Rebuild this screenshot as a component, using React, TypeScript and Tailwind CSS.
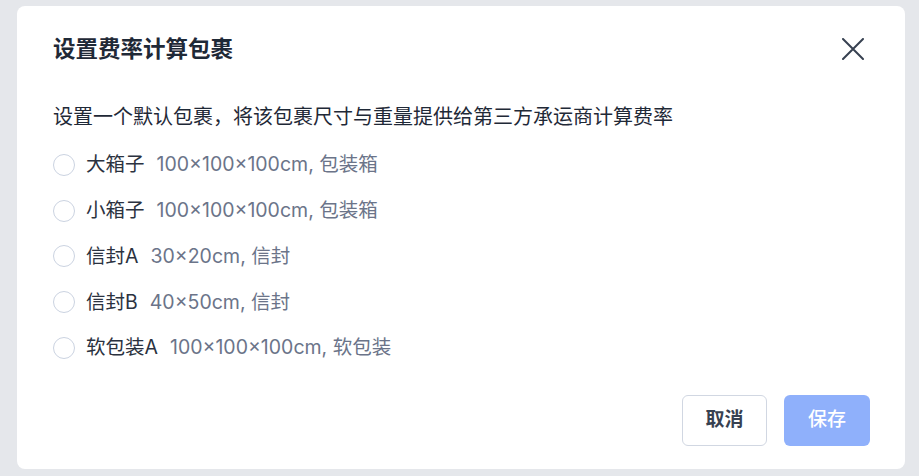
const PACKAGES = [
  { name: '大箱子', detail: '100×100×100cm, 包装箱' },
  { name: '小箱子', detail: '100×100×100cm, 包装箱' },
  { name: '信封A', detail: '30×20cm, 信封' },
  { name: '信封B', detail: '40×50cm, 信封' },
  { name: '软包装A', detail: '100×100×100cm, 软包装' },
]

export default function App() {
  return (
    <div
      className="h-[476px] w-[919px] overflow-hidden bg-[#e5e7eb] pl-[17px] pt-[6px]"
      style={{ fontFamily: 'Inter, "Noto Sans CJK SC", sans-serif' }}
    >
      <div className="flex h-[463px] w-[888px] flex-col rounded-lg bg-white pl-[36px] pr-[35px]">
        {/* header */}
        <div className="flex h-[86px] items-center justify-between pb-[1px]">
          <h2 className="text-[22.5px] font-semibold leading-[28px] text-[#1f2937]">设置费率计算包裹</h2>
          <button className="mr-[6px] text-[#374151]">
            <svg width="22" height="22" viewBox="0 0 22 22" fill="none" stroke="currentColor" strokeWidth="2" strokeLinecap="round">
              <path d="M1 1l20 20M21 1L1 21" />
            </svg>
          </button>
        </div>

        <p className="flex h-[50px] items-center text-[20px] leading-[28px] text-[#1f2937]">
          设置一个默认包裹，将该包裹尺寸与重量提供给第三方承运商计算费率
        </p>

        {/* package options */}
        <div className="flex flex-col">
          {PACKAGES.map((p) => (
            <label key={p.name} className="flex h-[45.75px] items-center">
              <span className="h-[22px] w-[22px] shrink-0 rounded-full border-[1.5px] border-[#cbd3e1]" />
              <span className="ml-[11px] text-[19.5px] text-[#2b3240]">{p.name}</span>
              <span className="ml-[12px] text-[19.5px] text-[#6b7489]">{p.detail}</span>
            </label>
          ))}
        </div>

        {/* footer */}
        <div className="mt-auto flex justify-end gap-[17px] pb-[23px]">
          <button className="h-[51px] w-[85px] rounded-md border border-[#d1d7e2] bg-white text-[19px] font-semibold text-[#374151]">
            取消
          </button>
          <button className="h-[51px] w-[86px] rounded-md bg-[#8fb0fb] text-[19px] font-medium text-white">
            保存
          </button>
        </div>
      </div>
    </div>
  )
}
